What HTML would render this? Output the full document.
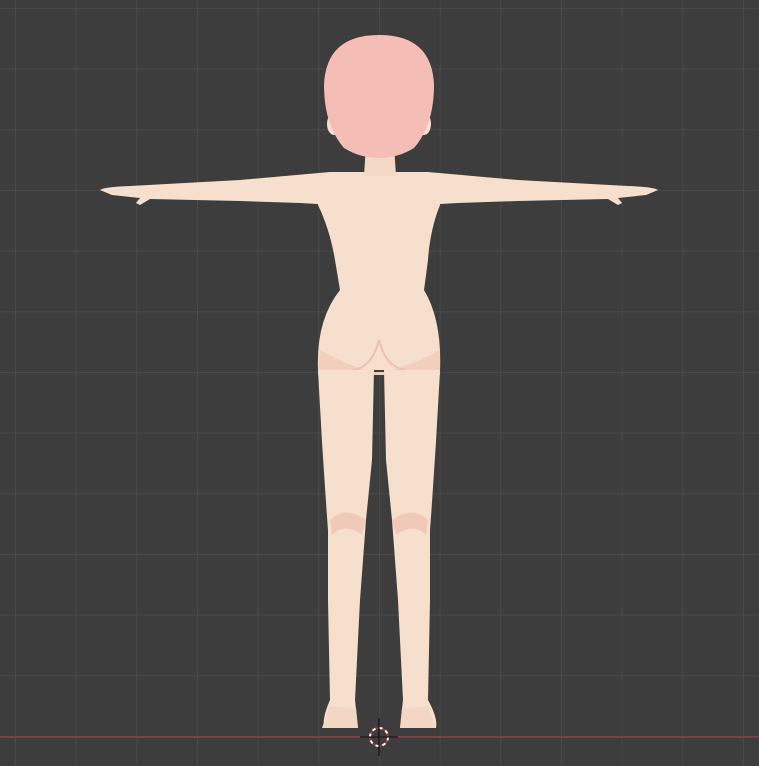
<!DOCTYPE html>
<html><head><style>html,body{margin:0;padding:0;background:#3d3d3d;}svg{display:block}</style></head>
<body>
<svg width="759" height="766" viewBox="0 0 759 766" xmlns="http://www.w3.org/2000/svg">
<defs>
<pattern id="g" x="15" y="8" width="60.67" height="60.67" patternUnits="userSpaceOnUse">
<path d="M0 0H60.67M0 0V60.67" stroke="#4d4d4d" stroke-width="1.5" fill="none"/>
</pattern>
</defs>
<rect width="759" height="766" fill="#3d3d3d"/>
<rect width="759" height="766" fill="url(#g)"/>
<line x1="0" y1="737" x2="759" y2="737" stroke="#8a4048" stroke-width="1.5"/>
<!-- arms -->
<path d="M100 190 Q103 187 130 186 L240 180 L330 172 L335 205 L300 203 L240 201 L150 199 L140 205 L136 203 L140 198 L112 195 Z" fill="#f6e0cd"/>
<path d="M658 190 Q655 187 628 186 L518 180 L428 172 L423 205 L458 203 L518 201 L608 199 L618 205 L622 203 L618 198 L646 195 Z" fill="#f6e0cd"/>
<!-- torso -->
<path d="M330 172 L428 172 Q442 180 440 205 Q430 230 428 260 L424 290 Q442 320 440 370 L318 370 Q316 320 340 290 L335 260 Q330 230 318 205 Q316 180 330 172 Z" fill="#f6e0cd"/>
<path d="M320 350 Q340 362 372 372 L386 372 Q420 362 440 350 L440 375 L318 375 Z" fill="#f2cfbd"/>
<path d="M379 340 Q372 368 352 370 M379 340 Q386 368 406 370" stroke="#ebc2ae" stroke-width="2" fill="none"/>
<!-- legs -->
<path d="M318 370 L374 370 L372 460 L366 520 L360 600 L355 700 L358 728 L324 728 Q322 718 330 700 L328 600 L328 530 Q322 450 318 370 Z" fill="#f6e0cd"/>
<path d="M440 370 L384 370 L386 460 L392 520 L398 600 L403 700 L400 728 L436 728 Q438 718 428 700 L430 600 L430 530 Q436 450 440 370 Z" fill="#f6e0cd"/>
<path d="M330 520 Q345 505 366 520 L362 535 Q345 522 332 535 Z M428 520 Q413 505 392 520 L396 535 Q413 522 426 535 Z" fill="#f0cab8"/>
<path d="M322 728 L358 728 L356 708 L330 706 Z M436 728 L400 728 L402 708 L428 706 Z" fill="#f3d6c4"/>
<!-- neck -->
<path d="M366 145 L394 145 L396 176 L364 176 Z" fill="#f4d8c6"/>
<!-- ears -->
<ellipse cx="334" cy="124" rx="7" ry="11" fill="#f6e0cd"/>
<ellipse cx="424" cy="124" rx="7" ry="11" fill="#f6e0cd"/>
<!-- head -->
<path d="M379 35 Q432 35 434 85 Q434 125 414 148 Q398 158 379 158 Q360 158 344 148 Q324 125 324 85 Q326 35 379 35 Z" fill="#f4bdb5"/>
<!-- crosshair -->
<circle cx="379" cy="737" r="9" fill="none" stroke="#ffffff" stroke-width="2" stroke-dasharray="4 3"/>
<circle cx="379" cy="737" r="9" fill="none" stroke="#b03030" stroke-width="2" stroke-dasharray="3 4" stroke-dashoffset="3.5"/>
<path d="M360 737H398M379 718V756" stroke="#111" stroke-width="1.2"/>
</svg>
</body></html>
